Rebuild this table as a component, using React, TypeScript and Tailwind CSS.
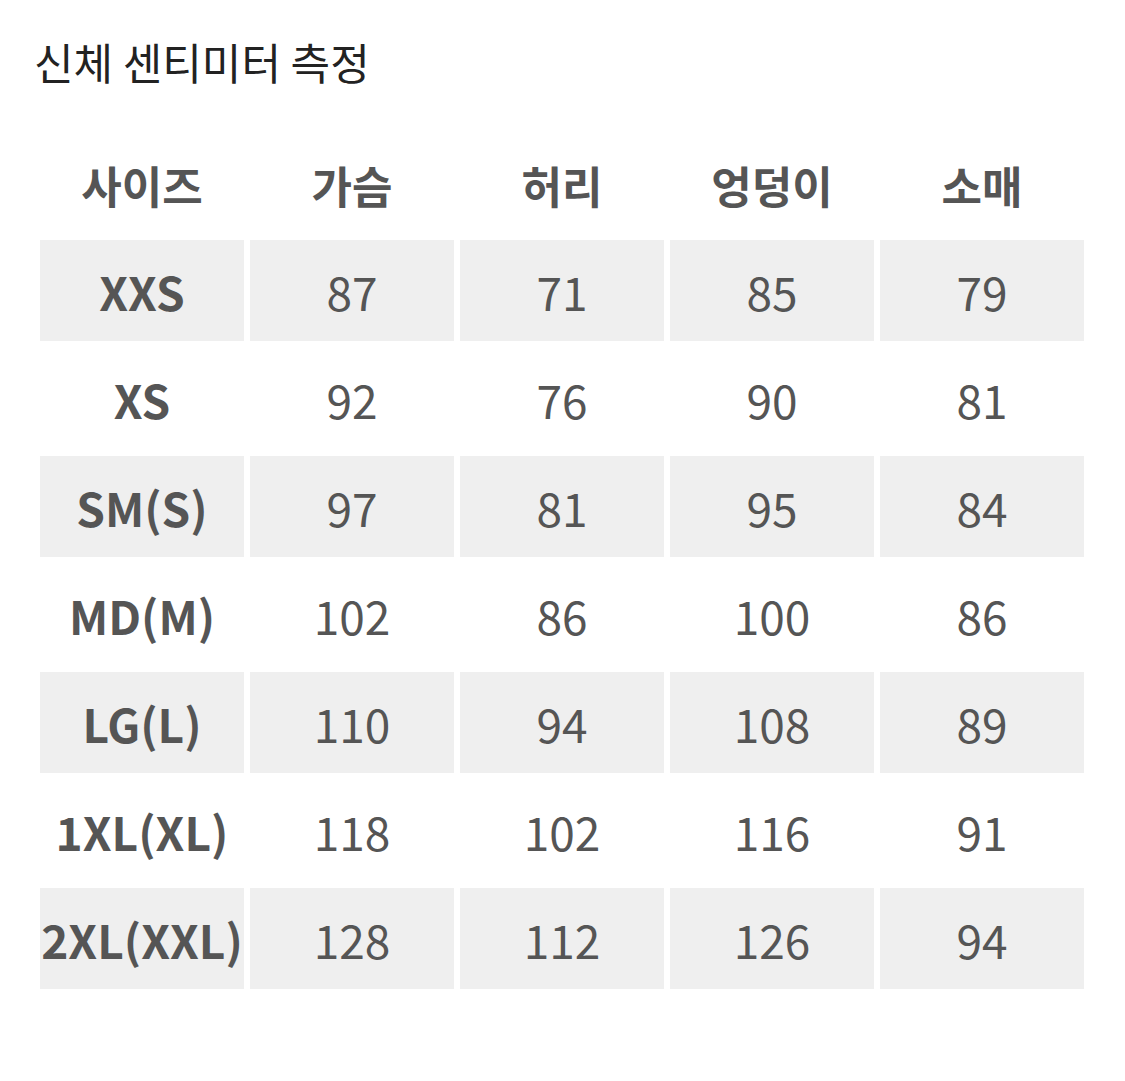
const headers = ['사이즈', '가슴', '허리', '엉덩이', '소매'];

const rows: [string, number, number, number, number][] = [
  ['XXS', 87, 71, 85, 79],
  ['XS', 92, 76, 90, 81],
  ['SM(S)', 97, 81, 95, 84],
  ['MD(M)', 102, 86, 100, 86],
  ['LG(L)', 110, 94, 108, 89],
  ['1XL(XL)', 118, 102, 116, 91],
  ['2XL(XXL)', 128, 112, 126, 94],
];

const font = { fontFamily: '"Noto Sans CJK KR", "Noto Sans", sans-serif' };

export default function App() {
  return (
    <div className="w-[1125px] h-[1081px] bg-white" style={font}>
      <div className="pt-[15px] pl-[34px] h-[107px] flex items-center text-[43px] text-[#222] leading-none">
        신체 센티미터 측정
      </div>
      <div className="pl-[40px]">
        <div className="grid grid-cols-[repeat(5,204px)] gap-x-[6px] mt-[23px] h-[110px] items-center">
          {headers.map((h) => (
            <div key={h} className="text-center text-[44px] font-bold text-[#555] leading-none">
              {h}
            </div>
          ))}
        </div>
        <div className="flex flex-col gap-y-[7px]">
          {rows.map((r, i) => (
            <div key={r[0]} className="grid grid-cols-[repeat(5,204px)] gap-x-[6px] h-[101px]">
              {r.map((v, j) => (
                <div
                  key={j}
                  className={`flex items-center justify-center text-[46px] leading-none text-[#555] ${
                    i % 2 === 0 ? 'bg-[#efefef]' : 'bg-white'
                  } ${j === 0 ? 'font-bold' : 'font-normal'}`}
                >
                  {v}
                </div>
              ))}
            </div>
          ))}
        </div>
      </div>
    </div>
  );
}
